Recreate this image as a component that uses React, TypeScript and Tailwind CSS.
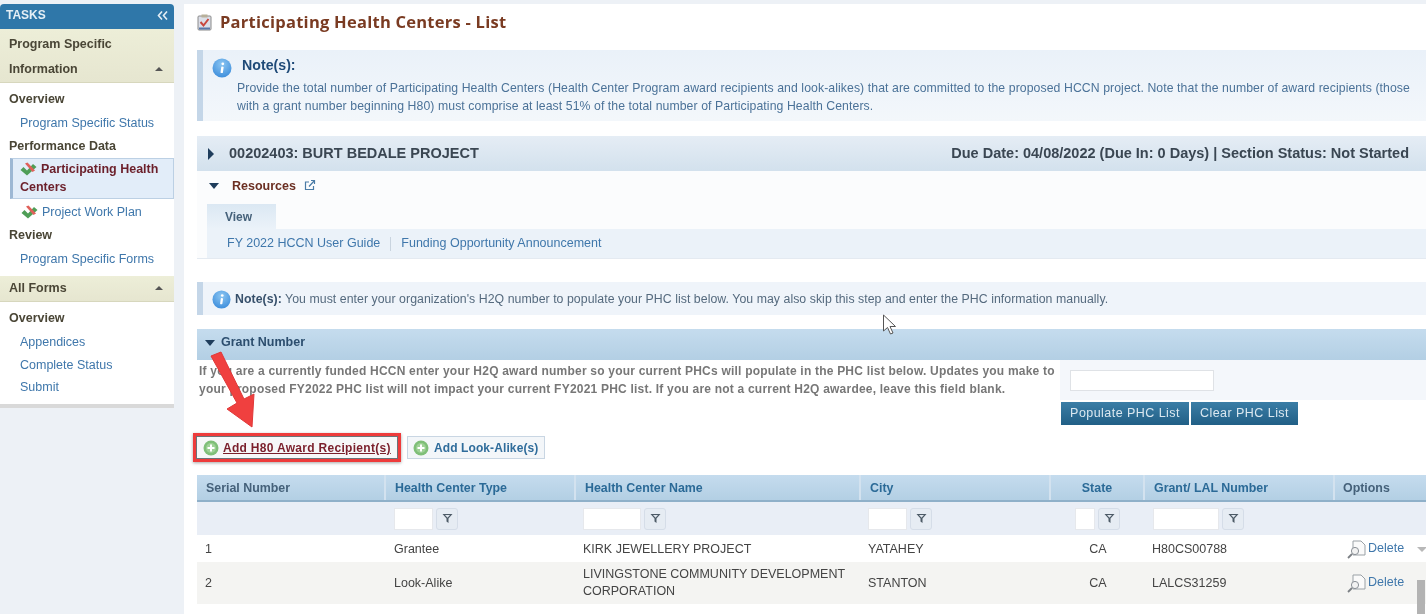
import React from "react";

const sans = { fontFamily: '"Liberation Sans", Arial, sans-serif' };

function StatusIcon() {
  return (
    <svg width="17" height="14" viewBox="0 0 17 14" className="shrink-0">
      <path d="M0.5 8 L3.5 5 L7 8.5 L13 2 L16.5 5 L7 13.5 Z" fill="#4f9e57" />
      <path d="M5 1.5 L7.5 0.5 L15 8.5 L12.5 10 Z" fill="#e0605a" />
    </svg>
  );
}

function InfoIcon({ size = 19, id }: { size?: number; id: string }) {
  return (
    <svg width={size} height={size} viewBox="0 0 20 20" className="shrink-0">
      <defs>
        <radialGradient id={id} cx="50%" cy="30%" r="70%">
          <stop offset="0%" stopColor="#8cc6f2" />
          <stop offset="100%" stopColor="#3f8fdc" />
        </radialGradient>
      </defs>
      <circle cx="10" cy="10" r="9.5" fill={`url(#${id})`} />
      <rect x="9" y="8.5" width="2.4" height="6.5" rx="0.6" fill="#fff" transform="rotate(8 10 11)" />
      <circle cx="10.8" cy="5.8" r="1.4" fill="#fff" />
    </svg>
  );
}

function PlusIcon() {
  return (
    <svg width="16" height="16" viewBox="0 0 16 16" className="shrink-0">
      <circle cx="8" cy="8" r="7.5" fill="#7fbf78" />
      <circle cx="8" cy="8" r="5" fill="#9ed196" />
      <path d="M8 4.5 V11.5 M4.5 8 H11.5" stroke="#fff" strokeWidth="2" />
    </svg>
  );
}

function FilterButton() {
  return (
    <div className="flex h-[22px] w-[22px] items-center justify-center rounded-[3px] border border-[#d5dde8] bg-[#e6ecf3]">
      <svg width="11" height="11" viewBox="0 0 11 11">
        <path d="M0.5 1 H10.5 L6.5 5.5 V10 L4.5 8.5 V5.5 Z" fill="#4c5a66" />
        <path d="M3 2 H8 L5.5 4.8 Z" fill="#dfe6ee" />
      </svg>
    </div>
  );
}

function DocSearchIcon() {
  return (
    <svg width="20" height="20" viewBox="0 0 20 20" className="shrink-0">
      <path d="M6 2 H14 L18 6 V16 H6 Z" fill="#fafafa" stroke="#9aa1a6" strokeWidth="1" />
      <circle cx="8" cy="12" r="3.6" fill="#f2f2f2" stroke="#8a9096" strokeWidth="1" />
      <path d="M5 15 L1 19" stroke="#7b7f84" strokeWidth="1.8" />
    </svg>
  );
}

function SideLink({ children }: { children: React.ReactNode }) {
  return <a className="block pl-5 text-[#3f77ab]">{children}</a>;
}

function SideHead({ children }: { children: React.ReactNode }) {
  return <div className="pl-[9px] font-bold text-[#4a4636]">{children}</div>;
}

function Caret() {
  return <div className="h-0 w-0 border-x-[4px] border-b-[4px] border-x-transparent border-b-[#555]" />;
}

function Sidebar() {
  return (
    <aside className="w-[174px] shrink-0 text-[12.5px]">
      <div className="flex h-[25px] items-center justify-between rounded-t-[4px] bg-[#2f77a9] pb-[3px] pl-[6px] pr-[6px] text-[12px] font-bold text-[#e4eef5]">
        <span>TASKS</span>
        <svg width="11" height="9" viewBox="0 0 11 9" fill="none" stroke="#e4eef5" strokeWidth="1.6">
          <path d="M5 0.5 L1.5 4.5 L5 8.5 M10 0.5 L6.5 4.5 L10 8.5" />
        </svg>
      </div>
      <div className="border-b border-[#d7d7bd] bg-gradient-to-b from-[#edeed8] to-[#e6e6d0] pb-[3px] pl-[9px] pr-[9px] font-bold text-[#4a4636]">
        <div className="flex h-[30px] items-center">Program Specific</div>
        <div className="flex h-[20px] items-center justify-between pr-[2px]">
          <span>Information</span>
          <Caret />
        </div>
      </div>
      <div className="bg-white">
        <div className="flex h-[28px] items-center pt-[4px]"><SideHead>Overview</SideHead></div>
        <div className="flex h-[24px] items-center"><SideLink>Program Specific Status</SideLink></div>
        <div className="flex h-[22px] items-center"><SideHead>Performance Data</SideHead></div>
        <div className="ml-[10px] mt-[1px] h-[41px] border border-l-[3px] border-[#bcd0e4] border-l-[#9db8d4] bg-[#e2edf9] pl-[7px] pt-[1px] font-bold leading-[18px] text-[#6b1f2a]">
          <div className="flex items-center gap-[5px]">
            <StatusIcon />
            <span className="-ml-[1px]">Participating Health</span>
          </div>
          <div>Centers</div>
        </div>
        <div className="flex h-[26px] items-center gap-[4px] pl-[21px] text-[#3f77ab]">
          <StatusIcon />
          <span>Project Work Plan</span>
        </div>
        <div className="flex h-[20px] items-center"><SideHead>Review</SideHead></div>
        <div className="flex h-[31px] items-center pb-[3px]"><SideLink>Program Specific Forms</SideLink></div>
      </div>
      <div className="flex h-[26px] items-center justify-between border-b border-[#d7d7bd] bg-gradient-to-b from-[#edeed8] to-[#e6e6d0] pb-[1px] pl-[9px] pr-[11px] font-bold text-[#4a4636]">
        <span>All Forms</span>
        <Caret />
      </div>
      <div className="border-b-[4px] border-[#d9d9d9] bg-white pb-[7px]">
        <div className="flex h-[29px] items-center pt-[3px]"><SideHead>Overview</SideHead></div>
        <div className="flex h-[22px] items-center"><SideLink>Appendices</SideLink></div>
        <div className="flex h-[24px] items-center"><SideLink>Complete Status</SideLink></div>
        <div className="flex h-[20px] items-center"><SideLink>Submit</SideLink></div>
      </div>
    </aside>
  );
}

const columns = "grid grid-cols-[189px_190px_285px_190px_94px_190px_91px]";

function HeadCell({ children, tone = "text-[#2b6a97]", center = false }: { children: React.ReactNode; tone?: string; center?: boolean }) {
  return (
    <div className={`flex items-center border-r-2 border-[#d3e2ef] px-[9px] pt-[1px] ${center ? "justify-center" : ""} ${tone}`}>
      {children}
    </div>
  );
}

function FilterCell({ w, ml = 8 }: { w: number; ml?: number }) {
  return (
    <div className="flex items-center gap-[3px]" style={{ paddingLeft: ml }}>
      <div className="h-[22px] border border-[#e6e8ec] bg-white" style={{ width: w }} />
      <FilterButton />
    </div>
  );
}

function Table() {
  return (
    <div className="mt-[13px] text-[12.5px]">
      <div className={`${columns} h-[27px] border-b-2 border-[#8fb0c9] bg-gradient-to-b from-[#c5dcee] to-[#b3cfe4] text-[12.4px] font-bold`}>
        <HeadCell tone="text-[#45617a]">Serial Number</HeadCell>
        <HeadCell>Health Center Type</HeadCell>
        <HeadCell>Health Center Name</HeadCell>
        <HeadCell>City</HeadCell>
        <HeadCell center>State</HeadCell>
        <HeadCell>Grant/ LAL Number</HeadCell>
        <div className="flex items-center px-[8px] pt-[1px] text-[#45617a]">Options</div>
      </div>
      <div className={`${columns} h-[33px] bg-[#e9eef6]`}>
        <div />
        <FilterCell w={39} />
        <FilterCell w={58} ml={7} />
        <FilterCell w={39} ml={7} />
        <FilterCell w={20} ml={24} />
        <FilterCell w={66} ml={8} />
        <div />
      </div>
      <div className={`${columns} h-[27px] items-center bg-white pt-[1px] text-[#444]`}>
        <div className="pl-[8px]">1</div>
        <div className="pl-[8px]">Grantee</div>
        <div className="pl-[7px]">KIRK JEWELLERY PROJECT</div>
        <div className="pl-[7px]">YATAHEY</div>
        <div className="text-center">CA</div>
        <div className="pl-[7px]">H80CS00788</div>
        <div className="flex items-center pl-[12px] text-[#3f77ab]">
          <DocSearchIcon />
          <span className="-mt-[1px] ml-[1px]">Delete</span>
        </div>
      </div>
      <div className={`${columns} h-[42px] items-center bg-[#f4f4f2] text-[#444]`}>
        <div className="pl-[8px]">2</div>
        <div className="pl-[8px]">Look-Alike</div>
        <div className="pl-[7px] leading-[17px]">
          LIVINGSTONE COMMUNITY DEVELOPMENT
          <br />
          CORPORATION
        </div>
        <div className="pl-[7px]">STANTON</div>
        <div className="text-center">CA</div>
        <div className="pl-[7px]">LALCS31259</div>
        <div className="flex items-center pl-[12px] text-[#3f77ab]">
          <DocSearchIcon />
          <span className="-mt-[1px] ml-[1px]">Delete</span>
        </div>
      </div>
    </div>
  );
}

export default function App() {
  return (
    <div className="relative flex h-[614px] w-[1426px] gap-[10px] overflow-hidden bg-[#edf1f6] pt-[4px] text-[12.5px] blur-[0.35px]" style={sans}>
      <Sidebar />
      <main className="min-w-0 flex-1 bg-white pl-[13px]">
        <div className="flex h-[46px] items-center gap-[8px] pb-[10px]">
          <svg width="15" height="17" viewBox="0 0 15 17" className="shrink-0">
            <rect x="1" y="2" width="13" height="14" rx="1" fill="#dcdfe8" stroke="#8a8a8a" />
            <rect x="4.5" y="0.5" width="6" height="3" fill="#b7b09a" />
            <path d="M3.5 8 L6.5 11.5 L11.5 5" stroke="#c9473d" strokeWidth="2" fill="none" />
            <rect x="2" y="13.5" width="11" height="2" fill="#5a78a8" />
          </svg>
          <h1 className="text-[16.5px] font-bold tracking-[0.25px] text-[#7a3b22]" style={{ fontFamily: '"Open Sans", sans-serif' }}>
            Participating Health Centers - List
          </h1>
        </div>

        <section className="h-[71px] border-l-[6px] border-[#c4d6e8] bg-gradient-to-b from-[#eaf1f9] to-[#f3f7fb] pl-[34px] pr-[14px] text-[#4b7298]">
          <div className="relative flex h-[29px] items-center pb-[1px] pt-[3px]">
            <div className="absolute -left-[25px] top-[8px]"><InfoIcon id="ia" size={20} /></div>
            <span className="ml-[5px] text-[14.2px] font-bold text-[#1f4a78]">Note(s):</span>
          </div>
          <p className="text-[12.25px] leading-[18px] tracking-[0.08px]">
            Provide the total number of Participating Health Centers (Health Center Program award recipients and look-alikes) that are committed to the proposed HCCN project. Note that the number of award recipients (those with a grant number beginning H80) must comprise at least 51% of the total number of Participating Health Centers.
          </p>
        </section>

        <section className="mt-[15px] flex h-[35px] items-center justify-between bg-gradient-to-b from-[#e5edf5] to-[#d3e1ed] pl-[11px] pr-[17px] text-[14.5px] font-bold text-[#3a4652]">
          <div className="flex items-center gap-[15px]">
            <div className="h-0 w-0 border-y-[6px] border-l-[6px] border-y-transparent border-l-[#1f3d5c]" />
            <span>00202403: BURT BEDALE PROJECT</span>
          </div>
          <span>Due Date: 04/08/2022 (Due In: 0 Days) | Section Status: Not Started</span>
        </section>

        <section className="h-[88px] border-b border-[#e4eaf1] bg-[#fbfcfd]">
          <div className="flex h-[33px] items-center pb-[3px] pl-[12px]">
            <div className="h-0 w-0 border-x-[5.5px] border-t-[6px] border-x-transparent border-t-[#1f3d5c]" />
            <span className="ml-[13px] text-[12.5px] font-bold text-[#6b2f22]">Resources</span>
            <svg width="12" height="12" viewBox="0 0 12 12" className="ml-[8px] -mt-[2px]" fill="none" stroke="#4a7ba6" strokeWidth="1.2">
              <path d="M9.5 7 V10.5 H1.5 V3 H5" />
              <path d="M5 7.5 L10.5 1.5 M7 1.5 H10.5 V5" />
            </svg>
          </div>
          <div className="ml-[10px] flex h-[25px] w-[69px] items-center bg-gradient-to-b from-[#dbe8f3] to-[#ebf2f9] pl-[18px] text-[12px] font-bold text-[#45617a]">
            View
          </div>
          <div className="ml-[10px] flex h-[29px] items-center bg-[#ebf2f9] pl-[20px] text-[#3f77ab]">
            <span>FY 2022 HCCN User Guide</span>
            <span className="mx-[10px] h-[14px] w-px bg-[#c9d4df]" />
            <span>Funding Opportunity Announcement</span>
          </div>
        </section>

        <section className="mt-[23px] flex h-[33px] items-center border-l-[6px] border-[#c4d6e8] bg-[#eff4fa] pl-[9px] pt-[1px] text-[12.3px] text-[#556a7e]">
          <InfoIcon id="ib" size={19} />
          <span className="ml-[4px] tracking-[0.05px]">
            <b className="text-[#37506b]">Note(s):</b> You must enter your organization's H2Q number to populate your PHC list below. You may also skip this step and enter the PHC information manually.
          </span>
        </section>

        <section className="mt-[14px] flex h-[31px] items-center gap-[6px] bg-gradient-to-b from-[#c5dcee] to-[#b3cfe4] pb-[4px] pl-[8px] text-[12.5px] font-bold text-[#2c4e6e]">
          <div className="h-0 w-0 border-x-[5.5px] border-t-[6px] border-x-transparent border-t-[#1f3d5c]" />
          <span>Grant Number</span>
        </section>

        <section className="flex">
          <p className="h-[40px] w-[863px] pl-[2px] pt-[2px] text-[12px] font-bold leading-[18px] tracking-[0.21px] text-[#777]">
            If you are a currently funded HCCN enter your H2Q award number so your current PHCs will populate in the PHC list below. Updates you make to your proposed FY2022 PHC list will not impact your current FY2021 PHC list. If you are not a current H2Q awardee, leave this field blank.
          </p>
          <div className="flex-1">
            <div className="flex h-[40px] items-center bg-[#f4f7fb] pl-[10px]">
              <div className="h-[21px] w-[144px] border border-[#dfe2e6] bg-white" />
            </div>
            <div className="mt-[2px] flex gap-[2px] pl-[1px]">
              <div className="flex h-[23px] w-[128px] items-center justify-center bg-gradient-to-b from-[#3b7ea6] to-[#215f86] text-[12.5px] tracking-[0.45px] text-[#dbe8f0]">Populate PHC List</div>
              <div className="flex h-[23px] w-[107px] items-center justify-center bg-gradient-to-b from-[#3b7ea6] to-[#215f86] text-[12.5px] tracking-[0.45px] text-[#dbe8f0]">Clear PHC List</div>
            </div>
          </div>
        </section>

        <section className="mt-[8px] flex items-center gap-[6px] text-[12px] font-bold">
          <div className="-ml-[4px] box-border flex h-[29px] w-[208px] border-[3px] border-[#ee3b3b] shadow-[0_1px_3px_rgba(0,0,0,0.35)]">
            <div className="flex flex-1 items-center gap-[4px] border border-[#6a7378] bg-[#f6f7f8] pl-[6px] text-[#7a1f2b] underline">
              <PlusIcon />
              <span className="tracking-[0.3px]">Add H80 Award Recipient(s)</span>
            </div>
          </div>
          <div className="flex h-[23px] w-[138px] items-center gap-[5px] border border-[#c9d6e3] bg-[#f3f6f9] pl-[5px] text-[#2f6c9b]">
            <PlusIcon />
            <span className="tracking-[0.1px]">Add Look-Alike(s)</span>
          </div>
        </section>

        <Table />
      </main>

      <svg width="70" height="90" viewBox="0 0 70 90" className="absolute left-[200px] top-[350px]">
        <path d="M11 6 L21 2 L44 49 L54 44 L52 77 L27 59 L37 53 Z" fill="#f0403f" stroke="#e03838" strokeWidth="1" />
      </svg>

      <svg width="16" height="22" viewBox="0 0 16 22" className="absolute left-[882px] top-[314px]">
        <path d="M1.5 1 V17 L5.5 13.5 L8.5 20 L11 19 L8 12.5 L13.5 12.5 Z" fill="#fff" stroke="#555" strokeWidth="1" />
      </svg>

      <div className="absolute left-[1417px] top-[547px] h-0 w-0 border-x-[5px] border-t-[5px] border-x-transparent border-t-[#b8b8b8]" />
      <div className="absolute left-[1417px] top-[580px] h-[34px] w-[8px] bg-[#b3b3b3]" />
    </div>
  );
}
